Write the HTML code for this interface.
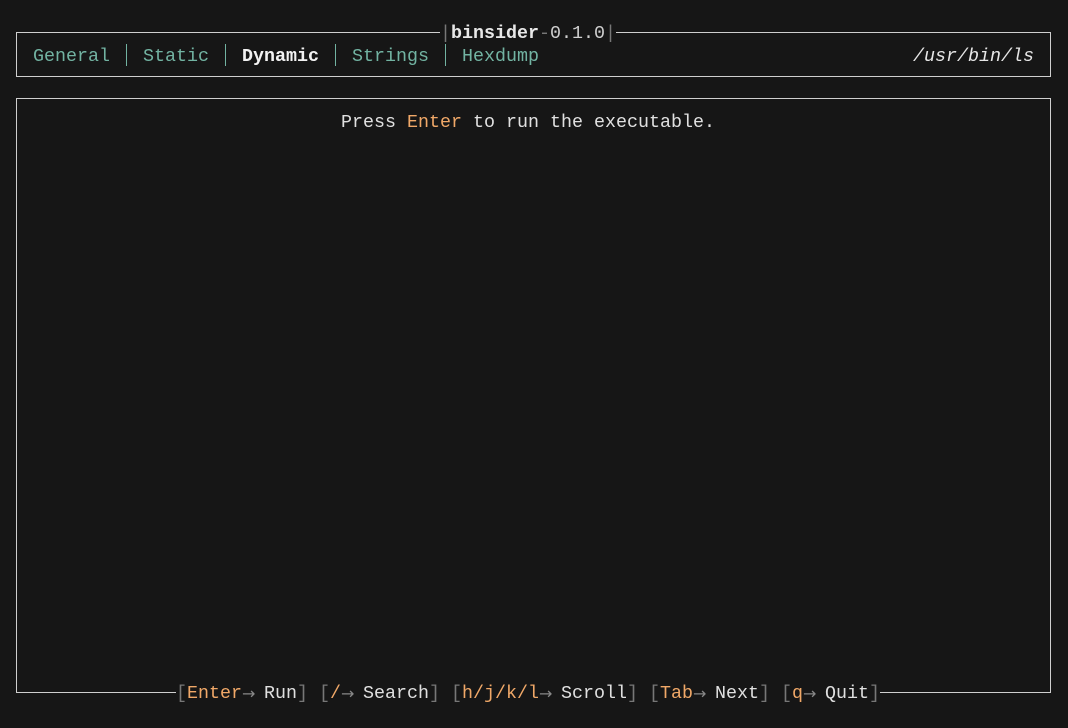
<!DOCTYPE html>
<html><head><meta charset="utf-8"><style>
html,body{margin:0;padding:0;background:#161616;width:1068px;height:728px;overflow:hidden}
body{position:relative;font-family:"Liberation Mono","DejaVu Sans Mono",monospace;font-size:18.33px;color:#e0e0e0}
.t{position:absolute;white-space:pre;line-height:22px;height:22px}
.b{position:absolute;border:1px solid #cfcfcf}
.tab{color:#72b3a2}
.sep{position:absolute;width:1px;background:#72b3a2;height:22px}
.o{color:#f0a868}
.g{color:#777}
.ar{display:inline-block;width:22px;color:#888;font-family:"DejaVu Sans",sans-serif;font-size:16px;text-align:left;vertical-align:top}
.gap{position:absolute;background:#161616;height:3px}
</style></head><body>
<div class="b" style="left:16px;top:32px;width:1033px;height:43px"></div>
<div class="gap" style="left:440px;top:31px;width:176px"></div>
<div class="t" style="left:440px;top:23px"><span class="g">|</span><b style="color:#e8e8e8">binsider</b><span class="g">-</span><span style="color:#cfcfcf">0.1.0</span><span class="g">|</span></div>

<div class="t tab" style="left:33px;top:46px">General</div>
<div class="sep" style="left:126px;top:44px"></div>
<div class="t tab" style="left:143px;top:46px">Static</div>
<div class="sep" style="left:225px;top:44px"></div>
<div class="t" style="left:242px;top:46px;font-weight:bold;color:#f2f2f2">Dynamic</div>
<div class="sep" style="left:335px;top:44px"></div>
<div class="t tab" style="left:352px;top:46px">Strings</div>
<div class="sep" style="left:445px;top:44px"></div>
<div class="t tab" style="left:462px;top:46px">Hexdump</div>
<div class="t" style="left:913px;top:46px;font-style:italic;color:#e6e6e6">/usr/bin/ls</div>

<div class="b" style="left:16px;top:98px;width:1033px;height:593px"></div>
<div class="t" style="left:341px;top:112px">Press <span class="o">Enter</span> to run the executable.</div>

<div class="gap" style="left:176px;top:690px;width:704px;height:4px"></div>
<div class="t" style="left:176px;top:683px"><span class="g">[</span><span class="o">Enter</span><span class="ar">→</span>Run<span class="g">]</span> <span class="g">[</span><span class="o">/</span><span class="ar">→</span>Search<span class="g">]</span> <span class="g">[</span><span class="o">h/j/k/l</span><span class="ar">→</span>Scroll<span class="g">]</span> <span class="g">[</span><span class="o">Tab</span><span class="ar">→</span>Next<span class="g">]</span> <span class="g">[</span><span class="o">q</span><span class="ar">→</span>Quit<span class="g">]</span></div>
</body></html>
